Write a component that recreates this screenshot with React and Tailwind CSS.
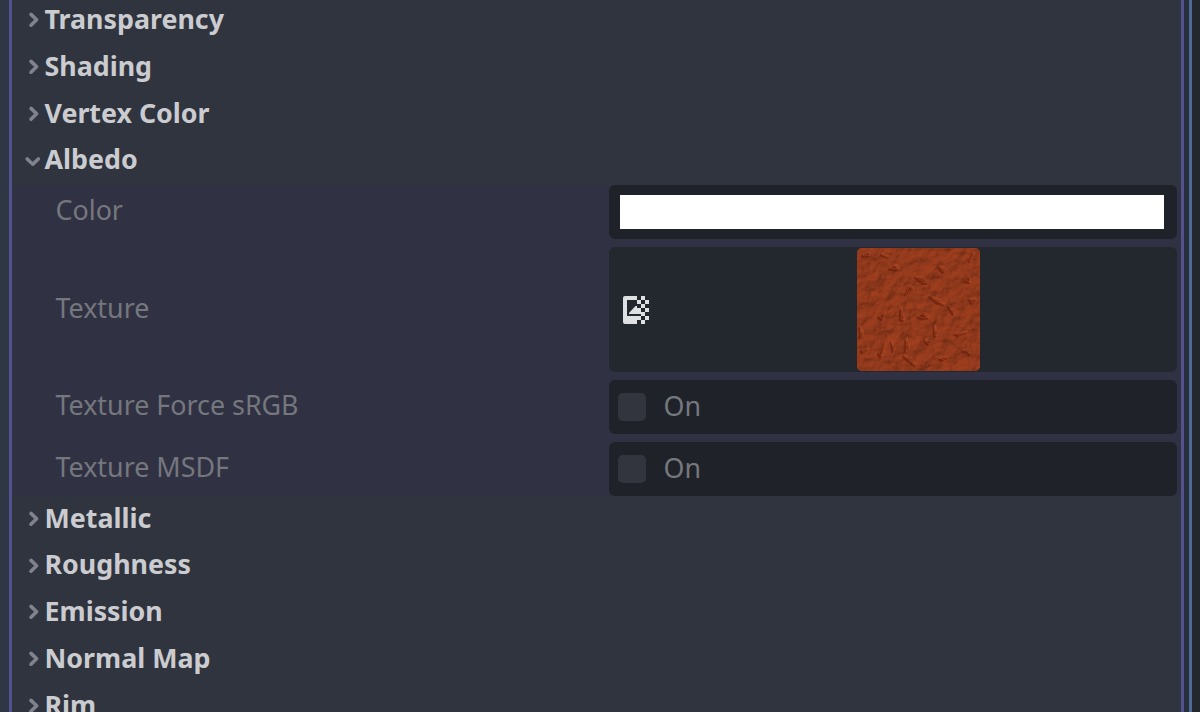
import React from "react";

function Chevron({ open }) {
  return (
    <svg width="20" height="20" viewBox="0 0 20 20" fill="none" stroke="#80838d" strokeWidth="3.6" strokeLinecap="round" strokeLinejoin="round" className="shrink-0">
      <path d={open ? "M4.2 8 L9.8 13.2 L15.3 8" : "M8 4.4 L13.6 9.8 L8 15.2"} />
    </svg>
  );
}

function Section({ title, open }) {
  return (
    <div className="flex h-[46.75px] shrink-0 items-center pl-[11px]">
      <div className="mt-[1.5px]">
        <Chevron open={open} />
      </div>
      <span className="ml-[1.5px] whitespace-nowrap text-[26.8px] leading-none font-bold text-[#cbccd0]">{title}</span>
    </div>
  );
}

function Property({ label, className, children }) {
  return (
    <div className={"flex items-stretch " + className}>
      <div className="flex w-[597px] shrink-0 items-center pl-[43.5px] pb-[2.8px] text-[26.85px] leading-none text-[#75777e]">{label}</div>
      {children}
    </div>
  );
}

function TextureIcon() {
  const cells = [];
  for (let row = 0; row < 7; row++) {
    if (row % 2 === 0) cells.push([18, row * 4]);
    else cells.push([14, row * 4], [22, row * 4]);
  }
  return (
    <svg width="26" height="28" viewBox="0 0 26 28" fill="#dfe0e1">
      <path d="M2 0 H14 V4 H4 V20 H14 V28 H2 Q0 28 0 26 V2 Q0 0 2 0 Z" />
      <path d="M6 18 V17 L12.5 10 H14 V12 H18 V18 Z" />
      {cells.map(([x, y]) => (
        <rect key={x + "-" + y} x={x} y={y} width="4" height="4" />
      ))}
    </svg>
  );
}

const CREASES =
  "M4 8 l7 -2 1 3 -7 1z M23 7 l7 3 -5 -1z M31 22 l6 -4 4 4 -4 1z M80 19 l8 4 -3 3z M111 15 l4 -10 1 3z M51 39 l-4 9 9 -6z M57 30 l8 7 5 -1 -6 -5z M71 49 l9 4 7 5 -8 -2z M59 70 l6 -4 6 5 -7 1z M43 61 l3 13 -4 -1z M20 70 l7 -4 -3 7z M2 80 l3 9 -3 2z M20 107 l7 -10 -4 13z M33 94 l4 8 -2 3z M45 108 l7 4 6 7 -9 -6z M48 92 l3 9 -4 4z M96 87 l13 -2 -9 4z M104 104 l6 -1 2 4z M81 112 l9 -2 -6 4z M111 52 l8 1 -5 4z M90 59 l7 6 -2 3z M76 78 l3 11 -3 1z M106 34 l5 -4 1 6z M3 103 l8 -1 -7 4z M66 93 l7 2 -3 3z";

function TexturePreview() {
  return (
    <svg width="123" height="123" viewBox="0 0 123 123" className="rounded-[5px]">
      <defs>
        <filter id="relief" x="0" y="0" width="100%" height="100%" colorInterpolationFilters="sRGB">
          <feTurbulence type="fractalNoise" baseFrequency="0.085" numOctaves="3" seed="8" result="noise" />
          <feColorMatrix in="noise" type="matrix" values="0 0 0 0 0  0 0 0 0 0  0 0 0 0 0  0.7 0.5 0 0 0" result="height" />
          <feDiffuseLighting in="height" surfaceScale="2.4" diffuseConstant="1.12" lightingColor="#923a1d">
            <feDistantLight azimuth="235" elevation="64" />
          </feDiffuseLighting>
        </filter>
        <filter id="soften">
          <feGaussianBlur stdDeviation="0.6" />
        </filter>
      </defs>
      <rect width="123" height="123" fill="#923a1d" />
      <rect width="123" height="123" filter="url(#relief)" opacity="0.8" />
      <path d={CREASES} fill="#6c210c" stroke="#6c210c" strokeWidth="0.8" opacity="0.75" filter="url(#soften)" />
      <path d={CREASES} transform="translate(2 -2)" fill="none" stroke="#bd5730" strokeWidth="0.9" opacity="0.45" filter="url(#soften)" />
    </svg>
  );
}

function CheckField() {
  return (
    <div className="flex w-[568px] items-center rounded-[6px] bg-[#1f2229] pl-[9px] pb-[1px]">
      <div className="size-[28px] rounded-[5px] bg-[#32353d]" />
      <span className="ml-[17.5px] text-[26.8px] leading-none text-[#75787d]">On</span>
    </div>
  );
}

export default function App() {
  return (
    <div className="flex h-[712px] w-[1200px] overflow-hidden bg-[#30343f] font-['Noto_Sans',sans-serif]">
      <div className="w-[9px] shrink-0 bg-[#2e3743]" />
      <div className="w-[3px] shrink-0 bg-[#54518f]" />
      <div className="flex w-[1169px] shrink-0 flex-col">
        <div className="-mt-[3.8px] flex shrink-0 flex-col">
          <Section title="Transparency" />
          <Section title="Shading" />
          <Section title="Vertex Color" />
          <Section title="Albedo" open />
        </div>
        <div className="mt-[1.8px] flex h-[311px] shrink-0 flex-col gap-[8px] bg-[#303243]">
          <Property label="Color" className="h-[54px]">
            <div className="w-[568px] rounded-[6px] bg-[#1f2229] pt-[10px] pr-[13px] pb-[10px] pl-[11px]">
              <div className="h-full bg-white" />
            </div>
          </Property>
          <Property label="Texture" className="h-[125px]">
            <div className="flex w-[568px] items-center rounded-[6px] bg-[#23282e] pl-[14px]">
              <TextureIcon />
              <div className="ml-[208px]">
                <TexturePreview />
              </div>
            </div>
          </Property>
          <Property label="Texture Force sRGB" className="h-[54px]">
            <CheckField />
          </Property>
          <Property label="Texture MSDF" className="h-[54px]">
            <CheckField />
          </Property>
        </div>
        <div className="-mt-[1.3px] flex shrink-0 flex-col">
          <Section title="Metallic" />
          <Section title="Roughness" />
          <Section title="Emission" />
          <Section title="Normal Map" />
          <Section title="Rim" />
        </div>
      </div>
      <div className="w-[3px] shrink-0 bg-[#54518f]" />
      <div className="w-[5px] shrink-0 bg-[#2a2e3c]" />
      <div className="w-[3px] shrink-0 bg-[#4d6b93]" />
      <div className="w-[8px] shrink-0 bg-[#23272e]" />
    </div>
  );
}
